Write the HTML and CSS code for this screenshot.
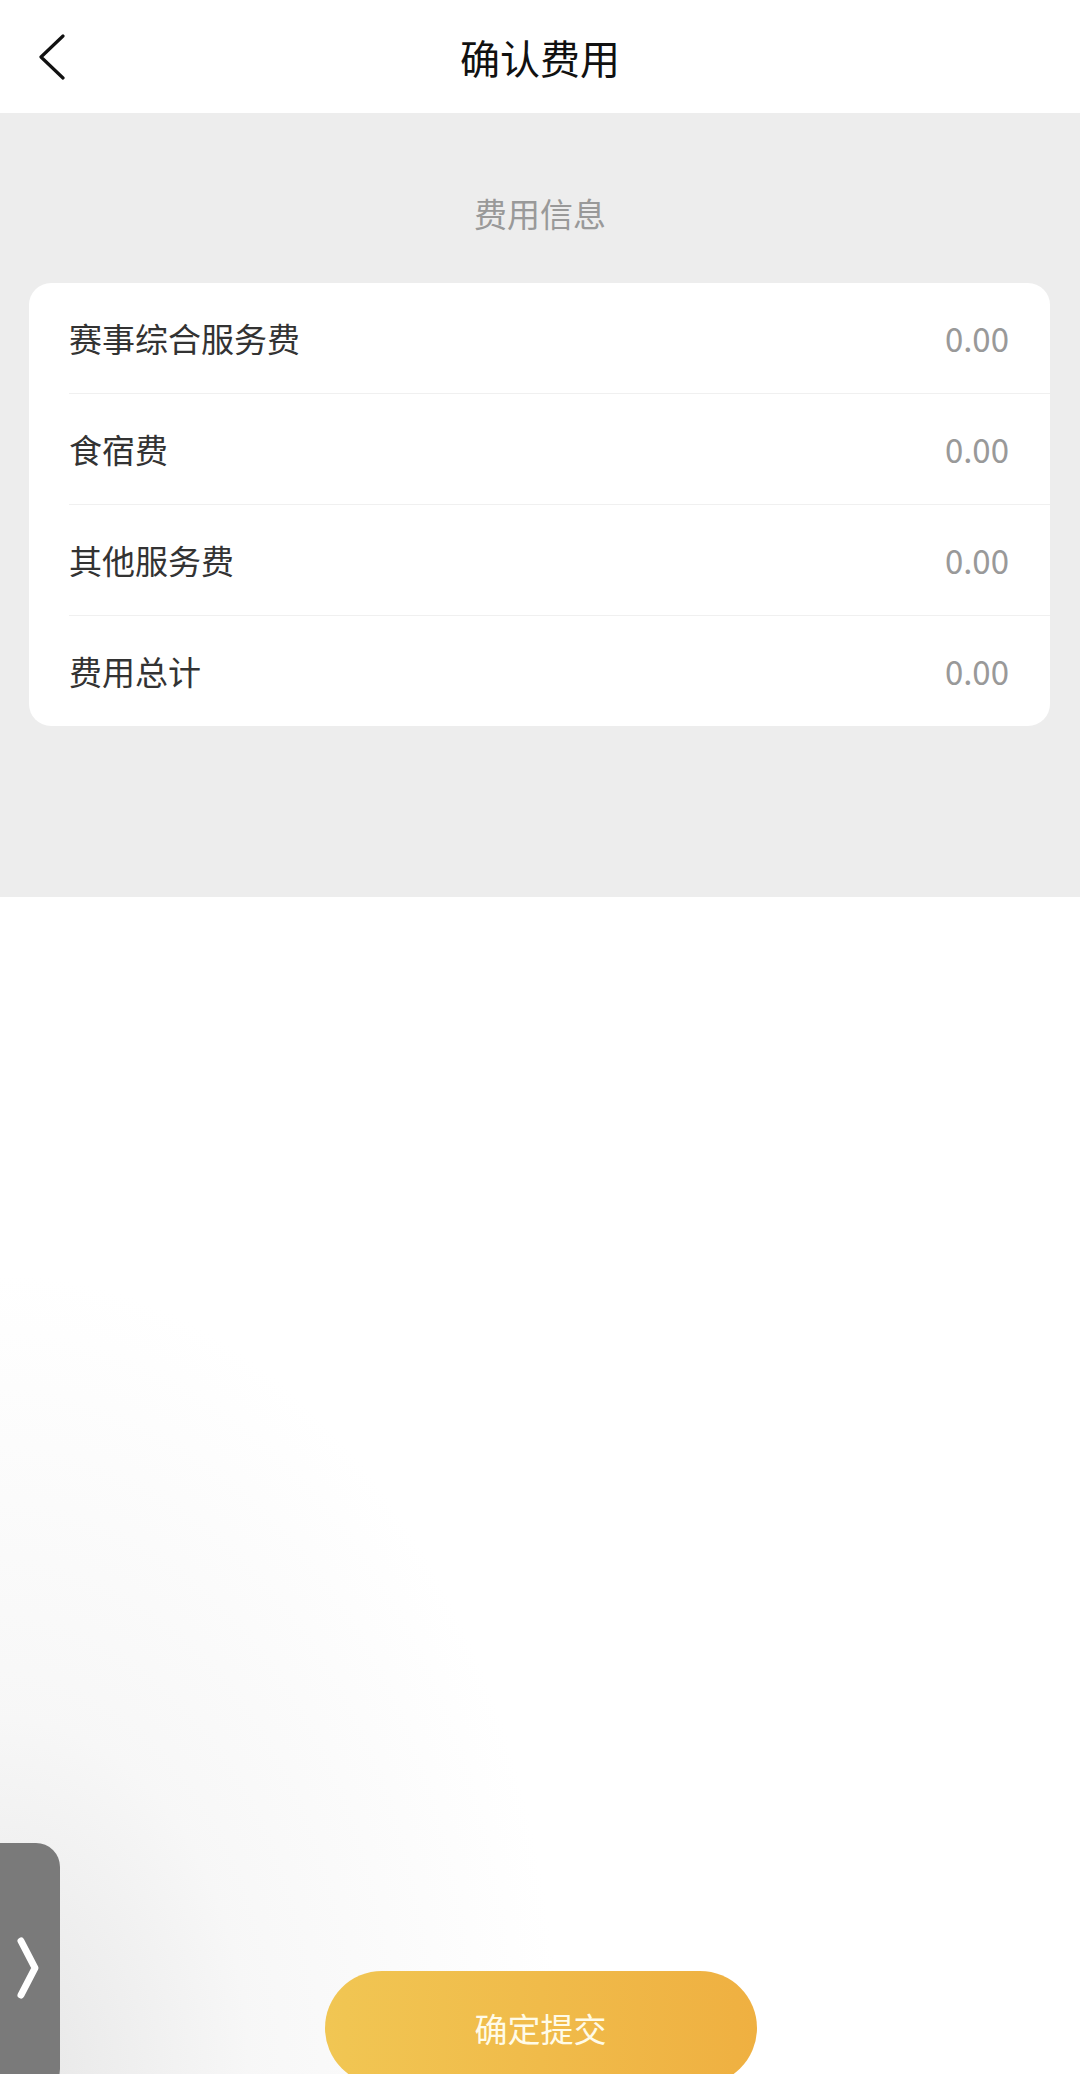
FILE: index.html
```html
<!DOCTYPE html>
<html lang="zh-CN">
<head>
    <meta charset="UTF-8">
    <meta name="viewport" content="width=device-width, initial-scale=1.0">
    <title>确认费用</title>
    <link rel="stylesheet" href="styles.css">
</head>
<body>
    <div class="page">
        <div class="header">
            <div class="back">
                <svg width="30" height="48" viewBox="0 0 30 48">
                    <polyline points="24,3 2,24 24,45" fill="none" stroke="#111" stroke-width="3.2" stroke-linecap="round" stroke-linejoin="round"/>
                </svg>
            </div>
            <h1 class="title">确认费用</h1>
            <div></div>
        </div>

        <div class="fees">
            <h2 class="fees-title">费用信息</h2>
            <div class="card">
                <div class="row">
                    <span class="label">赛事综合服务费</span>
                    <span class="value">0.00</span>
                </div>
                <div class="row">
                    <span class="label">食宿费</span>
                    <span class="value">0.00</span>
                </div>
                <div class="row">
                    <span class="label">其他服务费</span>
                    <span class="value">0.00</span>
                </div>
                <div class="row">
                    <span class="label">费用总计</span>
                    <span class="value">0.00</span>
                </div>
            </div>
        </div>

        <div class="bottom">
            <button class="submit">确定提交</button>
        </div>
    </div>

    <!-- 悬浮侧边按钮 -->
    <div class="side-tab">
        <svg width="24" height="64" viewBox="0 0 24 64">
            <polyline points="5,5 19,32 5,59" fill="none" stroke="#fff" stroke-width="7" stroke-linecap="round" stroke-linejoin="round"/>
        </svg>
    </div>
</body>
</html>
```

FILE: styles.css
```css
html, body {
    margin: 0;
    height: 2074px;
    overflow: hidden;
}
body {
    font-family: "Noto Sans CJK SC", "Noto Sans", sans-serif;
    background: #fff;
    color: #333;
}
.page {
    display: flex;
    flex-direction: column;
    height: 2074px;
}
.header {
    height: 113px;
    display: grid;
    grid-template-columns: 1fr auto 1fr;
    align-items: center;
    background: #fff;
}
.back {
    padding-left: 39px;
    display: flex;
    align-items: center;
}
.title {
    margin: 0;
    font-size: 40px;
    font-weight: 400;
    color: #111;
    line-height: 48px;
}
.fees {
    background: #ededed;
    padding: 75px 0 171px;
}
.fees-title {
    margin: 0 0 45px;
    text-align: center;
    font-size: 33px;
    font-weight: 400;
    line-height: 50px;
    color: #999;
}
.card {
    margin: 0 30px 0 29px;
    background: #fff;
    border-radius: 22px;
    overflow: hidden;
}
.row {
    height: 110px;
    margin-left: 40px;
    padding-right: 41px;
    display: flex;
    align-items: center;
    justify-content: space-between;
    border-bottom: 1px solid #f0f0f0;
}
.row:last-child {
    border-bottom: none;
}
.label {
    font-size: 33px;
    color: #333;
}
.value {
    font-size: 33px;
    color: #999;
}
.bottom {
    flex: 1;
    display: flex;
    justify-content: center;
    align-items: flex-end;
    background: radial-gradient(ellipse 560px 800px at 0 100%, #e6e6e6 0%, rgba(242,242,242,0.6) 45%, rgba(255,255,255,0) 100%);
}
.submit {
    width: 432px;
    height: 114px;
    margin: 0 0 -11px 1px;
    border: none;
    border-radius: 57px;
    background: linear-gradient(90deg, #f1c653, #efb041);
    color: #fffbe8;
    font-family: inherit;
    font-size: 33px;
    cursor: pointer;
}
.side-tab {
    position: fixed;
    left: 0;
    top: 1843px;
    width: 60px;
    height: 250px;
    background: #7a7a7a;
    border-radius: 0 24px 24px 0;
    display: flex;
    align-items: flex-start;
    padding-top: 93px;
    box-sizing: border-box;
    padding-left: 16px;
}
```
